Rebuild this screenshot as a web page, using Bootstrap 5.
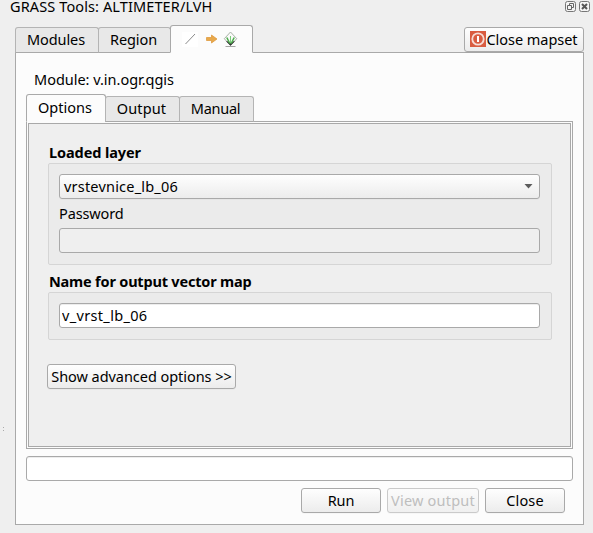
<!DOCTYPE html>
<html lang="en">
<head>
<meta charset="utf-8">
<title>GRASS Tools</title>
<link href="https://cdn.jsdelivr.net/npm/bootstrap@5.3.0/dist/css/bootstrap.min.css" rel="stylesheet">
<style>
html,body{height:533px;overflow:hidden}
body{background:#efefef;color:#000;font:14.5px/20px "Noto Sans",sans-serif}
.edge{border:1px solid #a9a9a9}
.titlebar{height:25px;padding-left:10px;padding-right:2px;line-height:12px}
.titlebar svg{display:block}
.toprow{height:28px;margin-bottom:-1px;position:relative}
.tabset .nav-link{border:1px solid #b4b4b4;border-bottom:1px solid #a9a9a9;border-radius:3px 3px 0 0;background:#e8e8e8;color:#000;padding:0 2px 2px 0;margin:0 -1px 0 0;height:26px;display:flex;align-items:center;justify-content:center}
.tabset .nav-link.active{height:28px;background:#fcfcfc;border-color:#a9a9a9;border-bottom-color:#fcfcfc}
.tabset .icon-tab{padding:0}
.outer{width:569px;height:473px;margin-left:15px;background:#fcfcfc;padding:16px 10px 0}
.inner-tabs{height:28px;margin-bottom:-1px;position:relative}
.pane{height:328px;padding:1px;background:#fcfcfc}
.pane-in{height:324px;background:#efefef;padding:19px 18px 0}
.group{width:504px;border:1px solid #d5d5d5;border-radius:2px;background:#ebebeb;padding:10px 11px 10px 10px}
.tool-btn,.combo{border:1px solid #a9a9a9;border-radius:3px;background:linear-gradient(#fefefe,#ececec);color:#000;font-size:inherit;line-height:20px;padding:0 0 2px;height:25px;display:flex;align-items:center;justify-content:center;box-shadow:0 1px 0 rgba(0,0,0,.025)}
.tool-btn:disabled{opacity:1;color:#bebebe;border-color:#cacaca;background:linear-gradient(#fbfbfb,#f0f0f0)}
.field{display:block;width:100%;height:25px;min-height:0;border:1px solid #a9a9a9;border-radius:3px;background:#fff;color:#000;font-size:inherit;line-height:20px;padding:0 2px 1px;box-shadow:inset 0 1px 0 #ededed}
.field:disabled{background:#efefef;box-shadow:none}
.handle{position:absolute;left:3px;top:427px;width:1px;height:4px;border-top:1px solid #aaa;border-bottom:1px solid #aaa}
</style>
<script src="https://cdn.jsdelivr.net/npm/bootstrap@5.3.0/dist/js/bootstrap.bundle.min.js"></script>
</head>
<body>
<header class="titlebar d-flex justify-content-between align-items-start">
  <span style="letter-spacing:.114px">GRASS Tools: ALTIMETER/LVH</span>
  <span class="d-flex">
    <svg width="13" height="13" viewBox="0 0 13 13" fill="none"><rect x="1.500" y="1.500" width="10" height="10" rx="2" fill="#f4f4f4" stroke="#777"/><path d="M5.500 3.500h4v4h-4z" stroke="#666"/><path d="M3.500 5.500h4v4h-4z" fill="#f4f4f4" stroke="#666"/></svg>
    <svg width="14" height="13" viewBox="0 0 14 13" fill="none"><rect x="2.500" y="1.500" width="10" height="10" rx="2" fill="#f4f4f4" stroke="#777"/><path d="M5 4l5 5M10 4l-5 5" stroke="#555" stroke-width="2"/></svg>
  </span>
</header>
<div class="toprow d-flex justify-content-between">
  <nav class="tabset nav flex-nowrap align-items-end" style="margin-left:15px">
    <a class="nav-link" style="width:84px;letter-spacing:-.096px">Modules</a>
    <a class="nav-link" style="width:73px;letter-spacing:-.099px">Region</a>
    <a class="nav-link active icon-tab" style="width:83px">
      <svg width="81" height="26" viewBox="171 26 81 26" fill="none">
        <path d="M182 32h16v15h-16z" fill="#fff"/>
        <path d="M185.500 44l9.500-10" stroke="#8b8b8b"/>
        <path d="M206.500 37.500h5v-2.500l5.500 4-5.500 4v-2.500h-5z" fill="#e8a94b" stroke="#dc9434" stroke-width=".7"/>
        <path d="M230.500 32l6.200 6.700-6.200 6.800-6.200-6.800z" fill="#f9fbf8" stroke="#a9b1a7"/>
        <path d="M226 41.200l4.500 4.600 4.500-4.600-1.500 0-3 2-3-2z" fill="#333"/>
        <path d="M230.500 43v-7" stroke="#7cc97c"/>
        <path d="M229.800 43.500l-3-6M231.200 43.500l3-6" stroke="#4fae4f" stroke-width="1.600"/>
        <path d="M225.500 46.500h10" stroke="#a4a4a4"/>
      </svg>
    </a>
  </nav>
  <button class="tool-btn" style="width:120px;margin:2px 9px 0 0;padding-right:1px;letter-spacing:-.046px">
    <svg width="16" height="16" viewBox="0 0 16 16" fill="none" style="margin-top:1px"><path d="M0 0h16v16H0z" fill="#d95c40"/><circle cx="8" cy="8" r="5.700" stroke="#f6ddd7" stroke-width="1.800"/><path d="M8 5v6" stroke="#fff" stroke-width="2"/></svg>
    <span style="margin-left:1px">Close mapset</span>
  </button>
</div>
<main class="outer edge">
  <div style="height:25px;padding-left:8px;line-height:20px;letter-spacing:-.019px">Module: v.in.ogr.qgis</div>
  <nav class="inner-tabs tabset nav flex-nowrap align-items-end">
    <a class="nav-link active" style="width:80px">Options</a>
    <a class="nav-link" style="width:75px;letter-spacing:.143px">Output</a>
    <a class="nav-link" style="width:75px;letter-spacing:-.266px">Manual</a>
  </nav>
  <section class="pane edge">
    <div class="pane-in edge">
      <div class="fw-bold" style="height:20px;line-height:18px;padding-left:2px;letter-spacing:-.087px">Loaded layer</div>
      <div class="group" style="height:102px;margin-left:1px">
        <div class="combo justify-content-between" style="padding:0 6px 2px 4px">
          <span style="letter-spacing:.202px">vrstevnice_lb_06</span>
          <svg width="9" height="5" viewBox="0 0 9 5" style="margin-top:1px"><path d="M.5 0h8l-4 4.500z" fill="#5c5c5c"/></svg>
        </div>
        <label class="d-block" style="height:29px;line-height:29px;letter-spacing:-.137px">Password</label>
        <input class="field" disabled>
      </div>
      <div class="fw-bold" style="height:27px;line-height:33px;padding-left:2px;letter-spacing:-.189px">Name for output vector map</div>
      <div class="group" style="height:48px;margin-left:1px">
        <input class="field" value="v_vrst_lb_06" style="letter-spacing:.336px">
      </div>
      <button class="tool-btn" style="width:189px;margin-top:24px;letter-spacing:-.047px">Show advanced options &gt;&gt;</button>
    </div>
  </section>
  <input class="field" style="margin-top:7px">
  <div class="d-flex justify-content-end" style="gap:6px;margin-top:7px;padding-right:8px">
    <button class="tool-btn" style="width:80px;letter-spacing:-.151px">Run</button>
    <button class="tool-btn" disabled style="width:92px;letter-spacing:.22px">View output</button>
    <button class="tool-btn" style="width:80px;letter-spacing:.138px">Close</button>
  </div>
</main>
<div class="handle"></div>
</body>
</html>
